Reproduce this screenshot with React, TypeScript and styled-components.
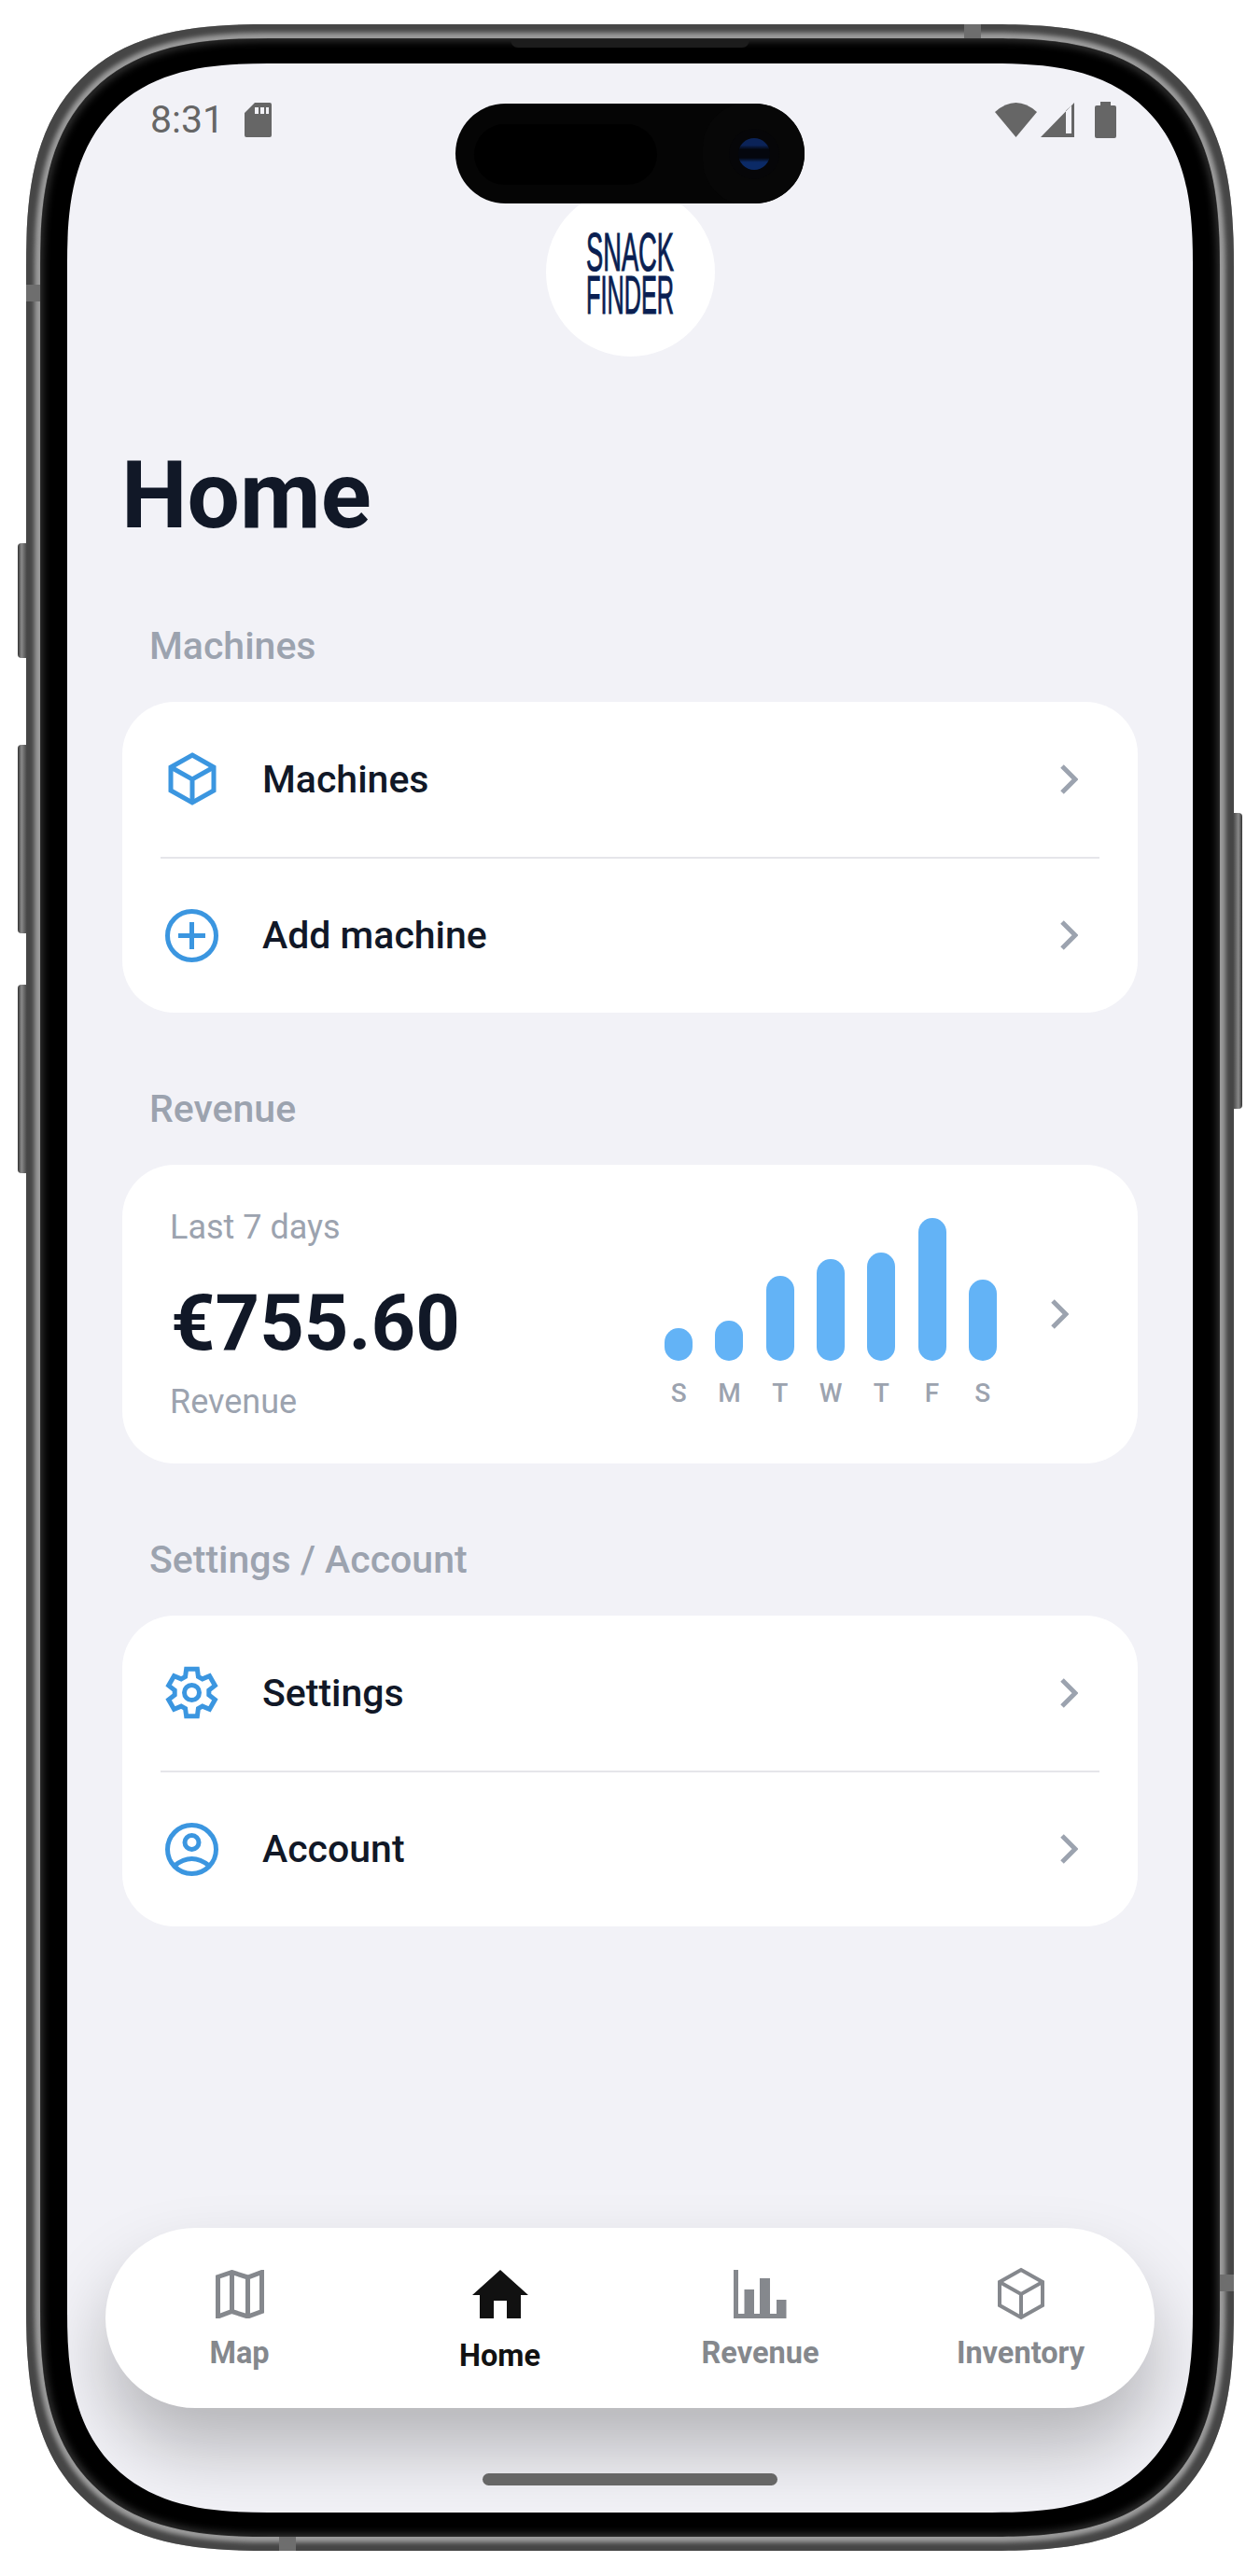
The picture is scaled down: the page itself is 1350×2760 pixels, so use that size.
import styled, { createGlobalStyle } from 'styled-components';

const GlobalStyle = createGlobalStyle`
  html, body {
    margin: 0;
    padding: 0;
    background: #fff;
  }

  body {
    font-family: Roboto, "Liberation Sans", sans-serif;
  }
`;

const Page = styled.div`
  width: 1350px;
  height: 2760px;
  box-sizing: border-box;
  padding: 26px 28px 27px;
  overflow: hidden;
`;

const Shell = styled.div`
  position: relative;
  height: 100%;
  box-sizing: border-box;
  padding: 16px;
  border-radius: 226px;
  background: #9c9c9c;
  box-shadow: inset 0 0 5px 9px #464646;

  @supports (corner-shape: superellipse(1.4)) {
    border-radius: 262px;
    corner-shape: superellipse(1.45);
  }
`;

const SideButton = styled.div<{ $top: number; $height: number; $right?: boolean }>`
  position: absolute;
  top: ${p => p.$top}px;
  height: ${p => p.$height}px;
  width: 10px;
  ${p => (p.$right ? 'right: -9px;' : 'left: -9px;')}
  border-radius: ${p => (p.$right ? '0 4px 4px 0' : '4px 0 0 4px')};
  background: linear-gradient(${p => (p.$right ? '270deg' : '90deg')}, #333 0%, #8a8a8a 40%, #444 100%);
`;

const Antenna = styled.div<{ $top: number; $left: number; $w: number; $h: number }>`
  position: absolute;
  top: ${p => p.$top}px;
  left: ${p => p.$left}px;
  width: ${p => p.$w}px;
  height: ${p => p.$h}px;
  background: #6e6e6e;
`;

const Bezel = styled.div`
  position: relative;
  height: 100%;
  box-sizing: border-box;
  padding: 26px 28px 25px;
  border-radius: 208px;
  background: #000;
  box-shadow: inset 0 0 9px 2px #333, 0 0 0 1px #2a2a2a;

  @supports (corner-shape: superellipse(1.4)) {
    border-radius: 245px;
    corner-shape: superellipse(1.42);
  }
`;

const Speaker = styled.div`
  position: absolute;
  top: 0;
  left: 503px;
  width: 256px;
  height: 9px;
  border-radius: 0 0 8px 8px;
  background: #1c1c1c;
`;

const Screen = styled.div`
  position: relative;
  height: 100%;
  display: flex;
  flex-direction: column;
  overflow: hidden;
  border-radius: 180px;
  background: #f2f2f7;

  @supports (corner-shape: superellipse(1.4)) {
    border-radius: 215px;
    corner-shape: superellipse(1.4);
  }
`;

const StatusBar = styled.div`
  flex: none;
  height: 133px;
  box-sizing: border-box;
  padding: 42px 82px 0 89px;
  display: flex;
  justify-content: space-between;
  align-items: flex-start;
`;

const StatusLeft = styled.div`
  display: flex;
  align-items: center;
  gap: 22px;
`;

const StatusRight = styled.div`
  display: flex;
  align-items: flex-start;
  gap: 4px;
`;

const Time = styled.span`
  font-size: 41px;
  line-height: 37px;
  color: #666;
`;

const BatteryIcon = styled.svg`
  margin: -1px 0 0 18px;
`;

const Island = styled.div`
  position: absolute;
  top: 43px;
  left: 416px;
  width: 374px;
  height: 107px;
  border-radius: 54px;
  background: #050505;
  overflow: hidden;
`;

const IslandSensor = styled.div`
  position: absolute;
  top: 22px;
  left: 20px;
  width: 196px;
  height: 65px;
  border-radius: 33px;
  background: #000;
`;

const CameraLens = styled.div`
  position: absolute;
  top: 37px;
  left: 303px;
  width: 34px;
  height: 34px;
  border-radius: 50%;
  background: linear-gradient(#0b2358 0 22%, #04060d 36% 62%, #0b2a66 76%);
  box-shadow: 0 0 0 10px #060608, 0 0 0 38px #070707;
`;

const LogoCircle = styled.div`
  flex: none;
  align-self: center;
  width: 181px;
  height: 181px;
  border-radius: 50%;
  background: #fff;
  display: flex;
  align-items: center;
  justify-content: center;
`;

const LogoText = styled.text`
  font-family: "Liberation Sans", sans-serif;
  font-size: 57px;
  fill: #0a1f52;
  stroke: #0a1f52;
  stroke-width: 1.1px;
`;

const Title = styled.h1`
  margin: 99px 0 0 58px;
  font-size: 100px;
  line-height: 100px;
  font-weight: 700;
  color: #111827;
`;

const Section = styled.section`
  margin: 79px 59px 0;
`;

const FirstSection = styled(Section)`
  margin-top: 87px;
`;

const SectionLabel = styled.h2`
  margin: 0 0 36px 29px;
  font-size: 41px;
  line-height: 48px;
  font-weight: 500;
  color: #9ca3af;
`;

const Card = styled.div`
  border-radius: 56px;
  background: #fff;
`;

const Row = styled.div`
  height: 165.5px;
  box-sizing: border-box;
  padding: 0 64px 0 46px;
  display: flex;
  align-items: center;
`;

const RowIcon = styled.div`
  flex: none;
  width: 57px;
  height: 57px;
  margin-right: 47px;
  display: flex;
  align-items: center;
  justify-content: center;
  color: #3b96e0;
`;

const RowText = styled.span`
  flex: 1;
  font-size: 41px;
  font-weight: 500;
  color: #111827;
`;

const Divider = styled.div`
  height: 2px;
  margin: 0 41px;
  background: #e5e5ea;
`;

const RevenueCard = styled(Card)`
  height: 320px;
  box-sizing: border-box;
  padding: 0 74px 0 51px;
  display: flex;
  align-items: center;
`;

const RevenueText = styled.div`
  flex: 1;
  align-self: flex-start;
  padding-top: 45px;
`;

const RevenueCaption = styled.div`
  font-size: 36px;
  line-height: 44px;
  color: #9ca3af;
`;

const Amount = styled.div`
  margin: 33px 0 14px 1px;
  font-size: 83px;
  line-height: 96px;
  font-weight: 700;
  color: #111827;
`;

const Chart = styled.div`
  flex: none;
  align-self: flex-start;
  width: 380px;
  margin-right: 46px;
  padding-top: 57px;
  display: grid;
  grid-template-columns: repeat(7, 1fr);
`;

const BarCell = styled.div`
  height: 153px;
  display: flex;
  align-items: flex-end;
  justify-content: center;
`;

const Bar = styled.div<{ $height: number }>`
  width: 30px;
  height: ${p => p.$height}px;
  border-radius: 15px;
  background: #63b3f6;
`;

const DayLabel = styled.div`
  margin-top: 20px;
  text-align: center;
  font-size: 28px;
  line-height: 30px;
  font-weight: 500;
  color: #9ca3af;
`;

const TabBar = styled.nav`
  flex: none;
  margin: auto 41px 70px;
  height: 193px;
  box-sizing: border-box;
  padding: 0 4px;
  border-radius: 97px;
  background: #fff;
  display: grid;
  grid-template-columns: repeat(4, 1fr);
  box-shadow: 0 44px 76px rgba(0, 0, 0, 0.25);
`;

const Tab = styled.div`
  padding-top: 42px;
  display: flex;
  flex-direction: column;
  align-items: center;
`;

const TabIcon = styled.div<{ $active?: boolean }>`
  height: 57px;
  display: flex;
  align-items: center;
  justify-content: center;
  color: ${p => (p.$active ? '#111' : '#85888d')};
`;

const TabLabel = styled.span<{ $active?: boolean }>`
  margin-top: ${p => (p.$active ? '19px' : '16px')};
  font-size: 32.5px;
  line-height: 38px;
  font-weight: 700;
  color: ${p => (p.$active ? '#111' : '#85888d')};
`;

const HomeIndicator = styled.div`
  flex: none;
  align-self: center;
  width: 316px;
  height: 13px;
  margin-bottom: 29px;
  border-radius: 7px;
  background: #666;
  position: relative;
`;

const Chevron = () => (
  <svg width="19" height="32" viewBox="0 0 19 32" fill="none" stroke="#9ca3af" strokeWidth="5">
    <path d="M2 2l14 14L2 30" />
  </svg>
);

const BoxIcon = ({ w, h, sw }: { w: number; h: number; sw: number }) => (
  <svg width={w} height={h} viewBox="0 0 52 57" fill="none" stroke="currentColor" strokeWidth={sw}>
    <path d="M26 3l23 13v25L26 54 3 41V16z" />
    <path d="M3 16l23 13 23-13M26 29v25" />
  </svg>
);

const PlusIcon = () => (
  <svg width="57" height="57" viewBox="0 0 57 57" fill="none" stroke="currentColor" strokeWidth="5">
    <circle cx="28.5" cy="28.5" r="26" />
    <path d="M14 28.5h29M28.5 14v29" />
  </svg>
);

// six blocky teeth round the hub
const gearPath = (() => {
  const pts: string[] = [];
  const at = (deg: number, r: number) => {
    const a = ((deg - 90) * Math.PI) / 180;
    return `${(28.5 + r * Math.cos(a)).toFixed(2)} ${(28.5 + r * Math.sin(a)).toFixed(2)}`;
  };
  for (let i = 0; i < 6; i++) {
    const c = i * 60;
    pts.push(at(c - 22, 18.5), at(c - 13, 26), at(c + 13, 26), at(c + 22, 18.5));
  }
  return `M${pts.join('L')}Z`;
})();

const GearIcon = () => (
  <svg width="57" height="57" viewBox="0 0 57 57" fill="none" stroke="currentColor" strokeWidth="5">
    <path d={gearPath} />
    <circle cx="28.5" cy="28.5" r="8" />
  </svg>
);

const AccountIcon = () => (
  <svg width="57" height="57" viewBox="0 0 57 57" fill="none" stroke="currentColor" strokeWidth="5">
    <circle cx="28.5" cy="28.5" r="26" />
    <circle cx="28.5" cy="21" r="7.5" />
    <path d="M10 46q18.500-15 37 0" />
  </svg>
);

const MapIcon = () => (
  <svg width="52" height="52" viewBox="0 0 52 52" fill="none" stroke="currentColor" strokeWidth="5">
    <path d="M2.500 7.500l15-5 17 5.500 15-5.500v42l-15 5.500-17-5.500-15 5.500zM17.500 2.500v42M34.500 8v41.500" />
  </svg>
);

const HomeGlyph = () => (
  <svg width="60" height="52" viewBox="0 0 60 52" fill="currentColor">
    <path d="M30 0l30 27H52v25H37V33H23v19H8V27H0z" />
  </svg>
);

const RevenueGlyph = () => (
  <svg width="57" height="52" viewBox="0 0 57 52" fill="currentColor">
    <path d="M0 0h5v47h6.500V21H22v26h6V9h11v38h7V32h10.500v20H0z" />
  </svg>
);

const days = [
  { label: 'S', height: 35 },
  { label: 'M', height: 43 },
  { label: 'T', height: 91 },
  { label: 'W', height: 109 },
  { label: 'T', height: 116 },
  { label: 'F', height: 153 },
  { label: 'S', height: 87 },
];

const App = () => {
  return (
    <>
      <GlobalStyle />
      <Page>
        <Shell>
          <SideButton $top={556} $height={123} />
          <SideButton $top={772} $height={202} />
          <SideButton $top={1029} $height={202} />
          <SideButton $top={845} $height={317} $right />
          <Antenna $top={279} $left={0} $w={16} $h={18} />
          <Antenna $top={0} $left={1005} $w={18} $h={16} />
          <Antenna $top={2411} $left={1278} $w={16} $h={18} />
          <Antenna $top={2691} $left={271} $w={18} $h={16} />
          <Bezel>
            <Speaker />
            <Screen>
              <StatusBar>
                <StatusLeft>
                  <Time>8:31</Time>
                  <svg width="29" height="37" viewBox="0 0 29 37" fill="#666">
                    <path fillRule="evenodd" d="M11 0h16a2 2 0 0 1 2 2v33a2 2 0 0 1-2 2H2a2 2 0 0 1-2-2V11zM11 5v7h4V5zM17 5v7h4V5zM23 5v7h3V5z" />
                  </svg>
                </StatusLeft>
                <StatusRight>
                  <svg width="45" height="37" viewBox="0 0 45 37" fill="#666">
                    <path d="M22.500 37L0 10Q22.500-10 45 10z" />
                  </svg>
                  <svg width="36" height="37" viewBox="0 0 36 37" fill="#666">
                    <path fillRule="evenodd" d="M36 0v37H0zM27 8.500V33h6V3z" />
                  </svg>
                  <BatteryIcon width="23" height="39" viewBox="0 0 23 39" fill="#666">
                    <path d="M6 0h11v4h4a2 2 0 0 1 2 2v31a2 2 0 0 1-2 2H2a2 2 0 0 1-2-2V6a2 2 0 0 1 2-2h4z" />
                  </BatteryIcon>
                </StatusRight>
              </StatusBar>
              <LogoCircle>
                <svg width="130" height="110" viewBox="-18 -8 130 110">
                  <LogoText x="0" y="45" textLength="94" lengthAdjust="spacingAndGlyphs">SNACK</LogoText>
                  <LogoText x="0" y="91" textLength="94" lengthAdjust="spacingAndGlyphs">FINDER</LogoText>
                </svg>
              </LogoCircle>
              <Island>
                <IslandSensor />
                <CameraLens />
              </Island>
              <Title>Home</Title>
              <FirstSection>
                <SectionLabel>Machines</SectionLabel>
                <Card>
                  <Row>
                    <RowIcon><BoxIcon w={52} h={57} sw={5} /></RowIcon>
                    <RowText>Machines</RowText>
                    <Chevron />
                  </Row>
                  <Divider />
                  <Row>
                    <RowIcon><PlusIcon /></RowIcon>
                    <RowText>Add machine</RowText>
                    <Chevron />
                  </Row>
                </Card>
              </FirstSection>
              <Section>
                <SectionLabel>Revenue</SectionLabel>
                <RevenueCard>
                  <RevenueText>
                    <RevenueCaption>Last 7 days</RevenueCaption>
                    <Amount>€755.60</Amount>
                    <RevenueCaption>Revenue</RevenueCaption>
                  </RevenueText>
                  <Chart>
                    {days.map((d, i) => (
                      <BarCell key={i}><Bar $height={d.height} /></BarCell>
                    ))}
                    {days.map((d, i) => (
                      <DayLabel key={i}>{d.label}</DayLabel>
                    ))}
                  </Chart>
                  <Chevron />
                </RevenueCard>
              </Section>
              <Section>
                <SectionLabel>Settings / Account</SectionLabel>
                <Card>
                  <Row>
                    <RowIcon><GearIcon /></RowIcon>
                    <RowText>Settings</RowText>
                    <Chevron />
                  </Row>
                  <Divider />
                  <Row>
                    <RowIcon><AccountIcon /></RowIcon>
                    <RowText>Account</RowText>
                    <Chevron />
                  </Row>
                </Card>
              </Section>
              <TabBar>
                <Tab>
                  <TabIcon><MapIcon /></TabIcon>
                  <TabLabel>Map</TabLabel>
                </Tab>
                <Tab>
                  <TabIcon $active><HomeGlyph /></TabIcon>
                  <TabLabel $active>Home</TabLabel>
                </Tab>
                <Tab>
                  <TabIcon><RevenueGlyph /></TabIcon>
                  <TabLabel>Revenue</TabLabel>
                </Tab>
                <Tab>
                  <TabIcon><BoxIcon w={52} h={57} sw={4} /></TabIcon>
                  <TabLabel>Inventory</TabLabel>
                </Tab>
              </TabBar>
              <HomeIndicator />
            </Screen>
          </Bezel>
        </Shell>
      </Page>
    </>
  );
};

export default App;
